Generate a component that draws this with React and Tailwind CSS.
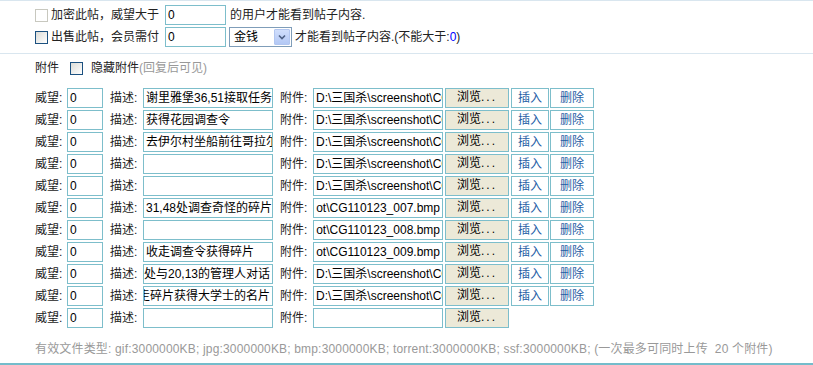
import React from 'react';

const rows = [
  { desc: '谢里雅堡36,51接取任务', file: 'D:\\三国杀\\screenshot\\CG110123_001.bmp', tools: true },
  { desc: '获得花园调查令', file: 'D:\\三国杀\\screenshot\\CG110123_002.bmp', tools: true },
  { desc: '去伊尔村坐船前往哥拉尔镇', file: 'D:\\三国杀\\screenshot\\CG110123_003.bmp', tools: true },
  { desc: '', file: 'D:\\三国杀\\screenshot\\CG110123_004.bmp', tools: true },
  { desc: '', file: 'D:\\三国杀\\screenshot\\CG110123_005.bmp', tools: true },
  { desc: '31,48处调查奇怪的碎片', file: 'ot\\CG110123_007.bmp', tools: true, end: true },
  { desc: '', file: 'ot\\CG110123_008.bmp', tools: true, end: true },
  { desc: '收走调查令获得碎片', file: 'ot\\CG110123_009.bmp', tools: true, end: true },
  { desc: '到处与20,13的管理人对话', file: 'D:\\三国杀\\screenshot\\CG110123_010.bmp', tools: true, descEnd: true },
  { desc: '拿走碎片获得大学士的名片', file: 'D:\\三国杀\\screenshot\\CG110123_011.bmp', tools: true, descEnd: true },
  { desc: '', file: '', tools: false },
];

const Field = ({ w, children, end = false }) => (
  <div
    className={`flex h-[20px] shrink-0 items-center overflow-hidden whitespace-nowrap border border-[#7dbecb] bg-white px-[2px] text-[#000] ${w} ${end ? 'justify-end' : ''}`}
  >
    {children}
  </div>
);

const Browse = () => (
  <div className="ml-[2px] flex h-[20px] w-[64px] shrink-0 items-center justify-center border border-[#7dbecb] bg-[#ece9d8] pb-[2px] text-[#000]">
    浏览<span className="tracking-[2px]">...</span>
  </div>
);

const Row = ({ row }) => (
  <div className="flex h-[22px] items-center">
    <span className="w-[32px] shrink-0">威望:</span>
    <Field w="w-[36px]">0</Field>
    <span className="ml-[7px] w-[33px] shrink-0">描述:</span>
    <Field w="w-[130px]" end={row.descEnd}>{row.desc}</Field>
    <span className="ml-[7px] w-[33px] shrink-0">附件:</span>
    <Field w="w-[130px]" end={row.end}>{row.file}</Field>
    <Browse />
    {row.tools && (
      <>
        <div className="ml-[2px] flex h-[20px] w-[38px] shrink-0 items-center justify-center border border-[#7dbecb] bg-white text-[#1f5ea5]">
          插入
        </div>
        <div className="ml-[1px] flex h-[20px] w-[44px] shrink-0 items-center justify-center border border-[#7dbecb] bg-white text-[#1f5ea5]">
          删除
        </div>
      </>
    )}
  </div>
);

export default function App() {
  return (
    <div
      className="h-[365px] w-[813px] bg-white text-[12px] leading-[16px] text-[#222]"
      style={{ fontFamily: 'Tahoma, "Liberation Sans", "Noto Sans CJK SC", sans-serif' }}
    >
      <div className="border-y border-[#d9e6ef] pb-[5px] pl-[35px] pt-[3px]">
        <div className="flex h-[22px] items-center">
          <span className="h-[13px] w-[13px] shrink-0 border border-[#c8c8bf] bg-white" />
          <span className="ml-[3px] w-[114px] shrink-0">加密此帖，威望大于</span>
          <Field w="w-[61px]">0</Field>
          <span className="ml-[4px]">的用户才能看到帖子内容.</span>
        </div>
        <div className="flex h-[22px] items-center">
          <span className="h-[13px] w-[13px] shrink-0 border border-[#1c5180] bg-gradient-to-br from-[#dcdcd7] to-white" />
          <span className="ml-[3px] w-[114px] shrink-0">出售此帖，会员需付</span>
          <Field w="w-[61px]">0</Field>
          <div className="ml-[3px] flex h-[20px] w-[63px] shrink-0 items-center justify-between border border-[#7f9db9] bg-white pl-[4px] pr-[1px] text-[#000]">
            <span>金钱</span>
            <span className="flex h-[16px] w-[16px] items-center justify-center rounded-[1px] border border-[#b2c6f0] bg-gradient-to-b from-[#d0defc] to-[#b3c8f5]">
              <svg width="8" height="6" viewBox="0 0 8 6">
                <path d="M1 1.5 L4 4.5 L7 1.5" fill="none" stroke="#4d6185" strokeWidth="1.6" />
              </svg>
            </span>
          </div>
          <span className="ml-[3px]">
            才能看到帖子内容.(不能大于:<span className="text-[#0000ff]">0</span>)
          </span>
        </div>
      </div>

      <div className="pl-[35px] pt-[3px]">
        <div className="flex h-[22px] items-center">
          <span className="w-[35px] shrink-0">附件</span>
          <span className="h-[13px] w-[13px] shrink-0 border border-[#1c5180] bg-gradient-to-br from-[#dcdcd7] to-white" />
          <span className="ml-[8px]">隐藏附件</span>
          <span className="text-[#999]">(回复后可见)</span>
        </div>

        <div className="mt-[8px] flex flex-col">
          {rows.map((row, i) => (
            <Row key={i} row={row} />
          ))}
        </div>

        <div className="mt-[10px] flex h-[20px] items-center whitespace-nowrap tracking-[0.17px] text-[#999]">
          有效文件类型: gif:3000000KB; jpg:3000000KB; bmp:3000000KB; torrent:3000000KB; ssf:3000000KB; (一次最多可同时上传&nbsp;&nbsp;20 个附件)
        </div>
      </div>
      <div className="mt-[4px] border-b-2 border-[#74bccb]" />
    </div>
  );
}
